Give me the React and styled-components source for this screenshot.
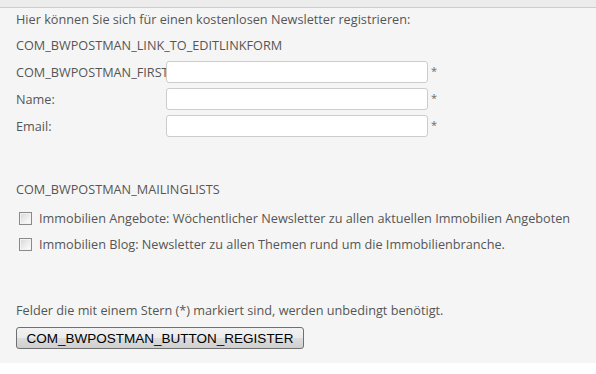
import React from "react";
import styled, { createGlobalStyle } from "styled-components";

const Global = createGlobalStyle`
  html, body { margin: 0; padding: 0; background: #ffffff; }
  body { font-family: "Open Sans", "Noto Sans", sans-serif; }
`;

const Page = styled.div`
  width: 596px;
  background: #f5f5f5;
  color: #555555;
  font-size: 12.7px;
`;

const TopBar = styled.div`
  height: 7px;
  background: #ececec;
  border-bottom: 1px solid #cdcdcd;
`;

const Form = styled.form`
  padding: 0 0 14px 16px;
  margin: 0;
`;

const Line = styled.div`
  display: flex;
  align-items: center;
  height: ${(p) => p.$h || 20}px;
  margin-top: ${(p) => p.$mt || 0}px;
  white-space: nowrap;
`;

const FieldRow = styled.div`
  display: flex;
  align-items: flex-start;
  height: 27px;
  padding-top: 1px;
  box-sizing: border-box;
`;

const Label = styled.label`
  width: 150px;
  overflow: hidden;
  white-space: nowrap;
  height: 22px;
  line-height: 22px;
`;

const Input = styled.input`
  width: 262px;
  height: 22px;
  box-sizing: border-box;
  border: 1px solid #cccccc;
  border-radius: 3px;
  background: #ffffff;
  padding: 2px 4px;
  margin: 0;
  font: inherit;
  outline: none;
`;

const Star = styled.span`
  margin-left: 3px;
  line-height: 20px;
  font-size: 11px;
  color: #6a6a6a;
`;

const CheckList = styled.div`
  margin-top: 6px;
`;

const CheckRow = styled.label`
  display: flex;
  align-items: center;
  height: 26px;
  padding-left: 3px;
  white-space: nowrap;
`;

const Box = styled.input.attrs({ type: "checkbox" })`
  appearance: none;
  -webkit-appearance: none;
  width: 13px;
  height: 13px;
  margin: 0 7px 0 0;
  box-sizing: border-box;
  border: 1px solid #8a8a8a;
  background: linear-gradient(135deg, #d6d6d6 0%, #f0f0f0 60%, #ffffff 100%);
  box-shadow: inset 0 0 0 1px #f2f2f2;
  flex: none;
`;

const Button = styled.button`
  margin-top: 7px;
  width: 288px;
  height: 22px;
  box-sizing: border-box;
  border: 1px solid #707070;
  border-radius: 3px;
  background: linear-gradient(to bottom, #f2f2f2 0%, #ebebeb 50%, #dddddd 51%, #cfcfcf 100%);
  font-family: "Liberation Sans", Arial, sans-serif;
  font-size: 13.5px;
  color: #000000;
  padding: 0;
  display: block;
`;

const fields = [
  { label: "COM_BWPOSTMAN_FIRSTNAME", name: "firstname" },
  { label: "Name:", name: "name" },
  { label: "Email:", name: "email" },
];

const lists = [
  "Immobilien Angebote: Wöchentlicher Newsletter zu allen aktuellen Immobilien Angeboten",
  "Immobilien Blog: Newsletter zu allen Themen rund um die Immobilienbranche.",
];

export default function App() {
  return (
    <>
      <Global />
      <Page>
        <TopBar />
        <Form onSubmit={(e) => e.preventDefault()}>
          <Line $h={22}>Hier können Sie sich für einen kostenlosen Newsletter registrieren:</Line>
          <Line $h={30}>COM_BWPOSTMAN_LINK_TO_EDITLINKFORM</Line>
          {fields.map((f) => (
            <FieldRow key={f.name}>
              <Label htmlFor={f.name}>{f.label}</Label>
              <Input id={f.name} />
              <Star>*</Star>
            </FieldRow>
          ))}
          <Line $mt={38}>COM_BWPOSTMAN_MAILINGLISTS</Line>
          <CheckList>
            {lists.map((l) => (
              <CheckRow key={l}>
                <Box />
                {l}
              </CheckRow>
            ))}
          </CheckList>
          <Line $mt={43}>Felder die mit einem Stern (*) markiert sind, werden unbedingt benötigt.</Line>
          <Button type="submit">COM_BWPOSTMAN_BUTTON_REGISTER</Button>
        </Form>
      </Page>
    </>
  );
}
